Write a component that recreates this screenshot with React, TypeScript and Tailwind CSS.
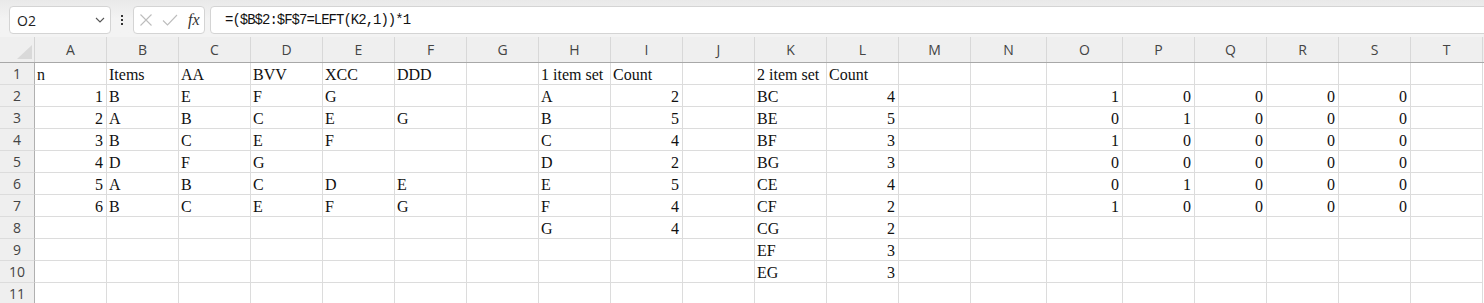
import React from "react";

type Cell = { t: string; r?: boolean };

const widths = [72, 72, 72, 72, 72, 72, 72, 72, 72, 72, 72, 72, 72, 76, 76, 72, 72, 72, 72, 72];
const letters = "ABCDEFGHIJKLMNOPQRST".split("");

function buildData(): Record<string, Cell> {
  const d: Record<string, Cell> = {};
  const set = (col: string, row: number, t: string, r = false) => {
    d[col + row] = { t, r };
  };
  ["n", "Items", "AA", "BVV", "XCC", "DDD"].forEach((t, i) => set("ABCDEF"[i], 1, t));
  set("H", 1, "1 item set");
  set("I", 1, "Count");
  set("K", 1, "2 item set");
  set("L", 1, "Count");
  const items = [
    ["B", "E", "F", "G"],
    ["A", "B", "C", "E", "G"],
    ["B", "C", "E", "F"],
    ["D", "F", "G"],
    ["A", "B", "C", "D", "E"],
    ["B", "C", "E", "F", "G"],
  ];
  items.forEach((row, i) => {
    set("A", i + 2, String(i + 1), true);
    row.forEach((t, j) => set("BCDEF"[j], i + 2, t));
  });
  const one = [["A", "2"], ["B", "5"], ["C", "4"], ["D", "2"], ["E", "5"], ["F", "4"], ["G", "4"]];
  one.forEach(([a, b], i) => {
    set("H", i + 2, a);
    set("I", i + 2, b, true);
  });
  const two = [["BC", "4"], ["BE", "5"], ["BF", "3"], ["BG", "3"], ["CE", "4"], ["CF", "2"], ["CG", "2"], ["EF", "3"], ["EG", "3"]];
  two.forEach(([a, b], i) => {
    set("K", i + 2, a);
    set("L", i + 2, b, true);
  });
  const m = [
    [1, 0, 0, 0, 0],
    [0, 1, 0, 0, 0],
    [1, 0, 0, 0, 0],
    [0, 0, 0, 0, 0],
    [0, 1, 0, 0, 0],
    [1, 0, 0, 0, 0],
  ];
  m.forEach((row, i) => row.forEach((v, j) => set("OPQRS"[j], i + 2, String(v), true)));
  return d;
}

const data = buildData();

function Chevron() {
  return (
    <svg width="10" height="6" viewBox="0 0 10 6" fill="none">
      <path d="M1 1l4 4 4-4" stroke="#555" strokeWidth="1.1" />
    </svg>
  );
}

export default function App() {
  const rows = Array.from({ length: 11 }, (_, i) => i + 1);
  return (
    <div className="w-[1484px] h-[303px] overflow-hidden bg-white font-['Liberation_Sans',sans-serif]">
      {/* Formula bar */}
      <div className="h-[37px] bg-gradient-to-b from-[#e9e9e9] via-[#f3f3f3] to-[#f3f3f3] flex items-start pt-[6px] pl-[9px] gap-0 overflow-hidden">
        <div className="w-[102px] h-[28px] shrink-0 bg-white border border-[#d4d4d4] rounded-[4px] flex items-center justify-between pl-[7px] pr-[5px]">
          <span className="text-[14px] text-[#222] font-['Open_Sans',sans-serif]">O2</span>
          <Chevron />
        </div>
        <div className="w-[22px] h-[28px] shrink-0 flex flex-col items-center justify-center gap-[2px]">
          <div className="w-[2px] h-[2px] bg-[#333]" />
          <div className="w-[2px] h-[2px] bg-[#333]" />
          <div className="w-[2px] h-[2px] bg-[#333]" />
        </div>
        <div className="w-[72px] h-[28px] shrink-0 bg-white border border-[#d4d4d4] rounded-[4px] flex items-center pl-[5px]">
          <svg width="14" height="14" viewBox="0 0 14 14" fill="none">
            <path d="M1.5 1.5l11 11M12.5 1.5l-11 11" stroke="#bdbdbd" strokeWidth="1.1" />
          </svg>
          <svg width="16" height="14" viewBox="0 0 16 14" fill="none" className="ml-[9px]">
            <path d="M1 7.5l4.5 4.5L15 2" stroke="#bdbdbd" strokeWidth="1.1" />
          </svg>
          <span className="ml-[10px] text-[16px] italic text-[#333] font-['Liberation_Serif',serif] leading-none">fx</span>
        </div>
        <div className="w-[1300px] h-[28px] shrink-0 ml-[5px] bg-white border border-[#d4d4d4] rounded-[4px] flex items-center pl-[14px]">
          <span className="text-[14px] text-[#111] font-['Liberation_Mono',monospace] tracking-[-1px]">=($B$2:$F$7=LEFT(K2,1))*1</span>
        </div>
      </div>

      {/* Column headers */}
      <div className="flex h-[26px] bg-[#efefef] border-b border-[#a8a8a8]">
        <div className="w-[35px] shrink-0 border-r border-[#d4d4d4] relative">
          <svg width="15" height="14" viewBox="0 0 15 14" className="absolute left-[17px] top-[8px]">
            <path d="M15 0V14H0Z" fill="#d9d9d9" />
          </svg>
        </div>
        {letters.map((l, i) => (
          <div
            key={l}
            style={{ width: widths[i] }}
            className="shrink-0 border-r border-[#d8d8d8] flex items-center justify-center text-[14px] text-[#444] font-['Open_Sans',sans-serif]"
          >
            {l}
          </div>
        ))}
      </div>

      {/* Rows */}
      {rows.map((r) => (
        <div key={r} className="flex h-[22px]">
          <div className="w-[35px] shrink-0 bg-[#efefef] border-r border-[#b0b0b0] border-b border-b-[#dcdcdc] flex items-center justify-center text-[14px] text-[#444] font-['Open_Sans',sans-serif]">
            {r}
          </div>
          {letters.map((l, i) => {
            const c = data[l + r];
            return (
              <div
                key={l}
                style={{ width: widths[i] }}
                className={`shrink-0 border-r border-b border-[#dcdcdc] flex items-end pb-0 text-[16px] leading-[18px] text-[#111] font-['Liberation_Serif',serif] whitespace-nowrap overflow-visible ${
                  c && c.r ? "justify-end pr-[3px]" : "justify-start pl-[2px]"
                }`}
              >
                {c ? c.t : ""}
              </div>
            );
          })}
        </div>
      ))}
    </div>
  );
}
